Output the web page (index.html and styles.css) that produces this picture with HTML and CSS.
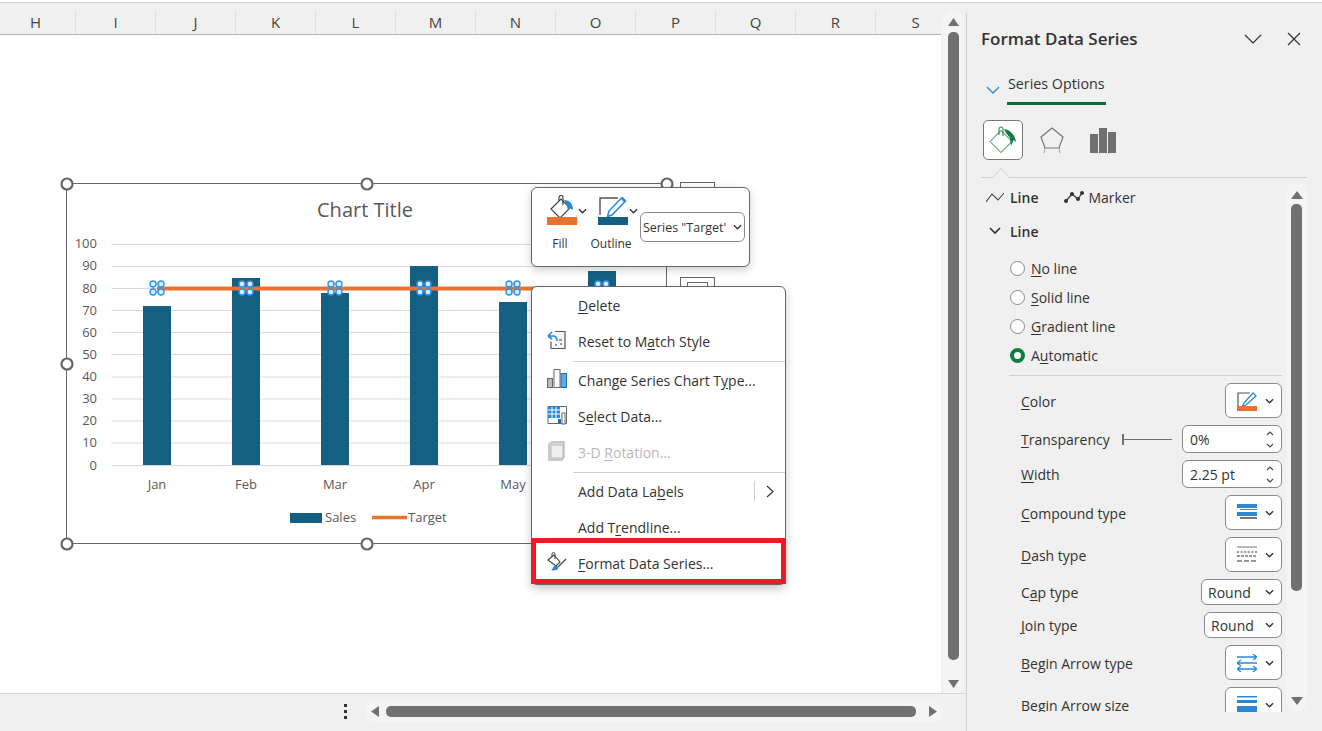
FILE: index.html
```html
<!DOCTYPE html>
<html lang="en">
<head>
  <meta charset="UTF-8">
  <title>Format Data Series</title>
  <link rel="stylesheet" href="styles.css">
</head>
<body>
  <!-- shared little icons -->
  <svg class="defs" width="0" height="0">
    <defs>
      <symbol id="chev" viewBox="0 0 10 6"><path d="M1 1l4 4 4-4" fill="none" stroke="#333" stroke-width="1.5"/></symbol>
      <symbol id="spin-up" viewBox="0 0 10 6"><path d="M2 5l3-3 3 3" fill="none" stroke="#444" stroke-width="1.2"/></symbol>
      <symbol id="spin-down" viewBox="0 0 10 6"><path d="M2 1l3 3 3-3" fill="none" stroke="#444" stroke-width="1.2"/></symbol>
      <g id="pt">
        <path d="M-4-4H4V4H-4Z" fill="none" stroke="#2f95e8" stroke-width="1"/>
        <circle cx="-4" cy="-4" r="3" fill="#d8ecfc" stroke="#2f95e8" stroke-width="1.4"/>
        <circle cx="4" cy="-4" r="3" fill="#d8ecfc" stroke="#2f95e8" stroke-width="1.4"/>
        <circle cx="-4" cy="4" r="3" fill="#d8ecfc" stroke="#2f95e8" stroke-width="1.4"/>
        <circle cx="4" cy="4" r="3" fill="#d8ecfc" stroke="#2f95e8" stroke-width="1.4"/>
      </g>
      <circle id="handle" r="5.5" fill="#fff" stroke="#666" stroke-width="2.2"/>
    </defs>
  </svg>

  <div class="app">
    <div class="sheet-area">
      <div class="col-head">
        <div class="col">H</div><div class="col">I</div><div class="col">J</div><div class="col">K</div>
        <div class="col">L</div><div class="col">M</div><div class="col">N</div><div class="col">O</div>
        <div class="col">P</div><div class="col">Q</div><div class="col">R</div><div class="col">S</div>
      </div>

      <div class="vscroll">
        <svg class="arrow" width="11" height="9" viewBox="0 0 11 9"><path d="M5.5 1L11 9H0Z" fill="#707070"/></svg>
        <div class="vthumb"></div>
        <svg class="arrow arrow-down" width="11" height="9" viewBox="0 0 11 9"><path d="M0 0H11L5.5 8Z" fill="#707070"/></svg>
      </div>

      <div class="sheet">
        <!-- chart sits free on the sheet, coordinates in the viewBox are window pixels -->
        <svg class="chart" width="941" height="658" viewBox="0 35 941 658">
          <rect x="680.500" y="182.500" width="34" height="30" fill="#fff" stroke="#666"/>
          <rect x="680.500" y="277.500" width="34" height="30" fill="#fff" stroke="#666"/>
          <rect x="687.500" y="282.500" width="20" height="20" fill="#fff" stroke="#666"/>
          <rect x="66.500" y="183.500" width="600" height="360" fill="#fff" stroke="#666"/>

          <text class="chart-title" x="365" y="217" text-anchor="middle">Chart Title</text>

          <g stroke="#d9d9d9">
            <path d="M112 244.500H646M112 266.500H646M112 288.500H646M112 310.500H646M112 332.500H646M112 354.500H646M112 377H646M112 399H646M112 421H646M112 443H646M112 465.500H646"/>
          </g>
          <g class="axis" text-anchor="end">
            <text x="97" y="248">100</text><text x="97" y="270">90</text><text x="97" y="293">80</text>
            <text x="97" y="315">70</text><text x="97" y="337">60</text><text x="97" y="359">50</text>
            <text x="97" y="381">40</text><text x="97" y="403">30</text><text x="97" y="425">20</text>
            <text x="97" y="447">10</text><text x="97" y="470">0</text>
          </g>

          <g fill="#156082">
            <rect x="143" y="306" width="28" height="159"/>
            <rect x="232" y="278" width="28" height="187"/>
            <rect x="321" y="293" width="28" height="172"/>
            <rect x="410" y="266" width="28" height="199"/>
            <rect x="499" y="302" width="28" height="163"/>
            <rect x="588" y="271" width="28" height="194"/>
          </g>
          <path d="M157 288.500H602" stroke="#e97132" stroke-width="4"/>
          <use href="#pt" x="157" y="288"/><use href="#pt" x="246" y="288"/><use href="#pt" x="335" y="288"/>
          <use href="#pt" x="424" y="288"/><use href="#pt" x="513" y="288"/><use href="#pt" x="602" y="288"/>

          <g class="axis" text-anchor="middle">
            <text x="157" y="489">Jan</text><text x="246" y="489">Feb</text><text x="335" y="489">Mar</text>
            <text x="424" y="489">Apr</text><text x="513" y="489">May</text>
          </g>

          <rect x="290" y="513" width="32" height="10" fill="#156082"/>
          <text class="axis" x="325" y="522">Sales</text>
          <path d="M372 517.500H407" stroke="#e97132" stroke-width="3.500"/>
          <text class="axis" x="408" y="522">Target</text>

          <use href="#handle" x="67" y="184"/><use href="#handle" x="367" y="184"/><use href="#handle" x="667" y="184"/>
          <use href="#handle" x="67" y="364"/><use href="#handle" x="67" y="544"/><use href="#handle" x="367" y="544"/>
        </svg>

        <!-- mini toolbar -->
        <div class="mini-bar">
          <div class="mini-btn">
            <div class="mini-icon">
              <svg width="30" height="30" viewBox="0 0 30 30">
                <path d="M4 14L14 4l9 9-10 10Z" fill="#fff" stroke="#444" stroke-width="1.2"/>
                <path d="M12 6V2.500a2 2 0 0 1 4 0V10" fill="none" stroke="#444" stroke-width="1.2"/>
                <path d="M17 5c6 0 9 4 9 10l-3-2-2 3-1-5Z" fill="#2b88d8"/>
                <rect y="22" width="30" height="8" fill="#e97132"/>
              </svg>
              <svg class="chev" width="9" height="6"><use href="#chev"/></svg>
            </div>
            <span>Fill</span>
          </div>
          <div class="mini-btn">
            <div class="mini-icon">
              <svg width="30" height="30" viewBox="0 0 30 30">
                <path d="M20 3H2V20" fill="none" stroke="#555" stroke-width="1.4"/>
                <path d="M11 16L24 2.500l3.500 3.500L14 20l-4.500 1.500Z" fill="#fff" stroke="#2b88d8" stroke-width="1.5"/>
                <path d="M23 4l3.500 3.500 1.500-2-3-3Z" fill="#2b88d8"/>
                <rect y="22" width="30" height="8" fill="#156082"/>
              </svg>
              <svg class="chev" width="9" height="6"><use href="#chev"/></svg>
            </div>
            <span>Outline</span>
          </div>
          <div class="mini-select">Series "Target'<svg class="chev" width="9" height="6"><use href="#chev"/></svg></div>
        </div>

        <!-- context menu -->
        <div class="menu">
          <div class="menu-item"><span class="menu-icon"></span><span><u>D</u>elete</span></div>
          <div class="menu-item">
            <span class="menu-icon">
              <svg width="20" height="20" viewBox="0 0 20 20">
                <path d="M8 1.500h10v17H4v-7" fill="#f7f7f7" stroke="#555" stroke-width="1.2"/>
                <path d="M1 6l4-4M1 6l4 3M1 6h5c3 0 4 2 4 5" fill="none" stroke="#2b88d8" stroke-width="1.6"/>
                <path d="M8 15h2M12 10h3M13 14h2" stroke="#777" stroke-width="1.4"/>
              </svg>
            </span>
            <span>Reset to M<u>a</u>tch Style</span>
          </div>
          <div class="menu-sep"></div>
          <div class="menu-item">
            <span class="menu-icon">
              <svg width="20" height="20" viewBox="0 0 20 20">
                <rect x="0.500" y="9.500" width="5" height="9" fill="#bbb" stroke="#666"/>
                <rect x="7" y="0.500" width="6" height="18" fill="#fff" stroke="#666"/>
                <rect x="14" y="4.500" width="5.500" height="14" fill="#5ea9e6" stroke="#1f6fb5"/>
              </svg>
            </span>
            <span>Change Series Chart T<u>y</u>pe...</span>
          </div>
          <div class="menu-item">
            <span class="menu-icon">
              <svg width="20" height="20" viewBox="0 0 20 20">
                <path d="M1 1.500H19.500V18.500H1Z" fill="#fff" stroke="#666"/>
                <path d="M1 1.500H13V13H1Z" fill="#2b88d8"/>
                <path d="M1 5H13M1 9H13M5 2V13M9 2V13" stroke="#fff"/>
                <rect x="11" y="14" width="3" height="5" fill="#1f6fb5"/>
                <rect x="15" y="8" width="3" height="11" fill="#fff" stroke="#666"/>
              </svg>
            </span>
            <span>S<u>e</u>lect Data...</span>
          </div>
          <div class="menu-item menu-off">
            <span class="menu-icon">
              <svg width="20" height="20" viewBox="0 0 20 20">
                <path d="M2 3l3-2h12v15l-2 3H2Z" fill="#ddd" stroke="#bbb" stroke-width="1.400"/>
                <path d="M4 4h12v13H4Z" fill="#eee" stroke="#bbb"/>
              </svg>
            </span>
            <span>3-D <u>R</u>otation...</span>
          </div>
          <div class="menu-sep"></div>
          <div class="menu-item">
            <span class="menu-icon"></span><span>Add Data La<u>b</u>els</span>
            <span class="menu-sub">
              <svg width="10" height="13" viewBox="0 0 10 13"><path d="M2 1l6 5.500-6 5.500" fill="none" stroke="#333" stroke-width="1.2"/></svg>
            </span>
          </div>
          <div class="menu-item"><span class="menu-icon"></span><span>Add T<u>r</u>endline...</span></div>
          <div class="menu-item">
            <span class="menu-icon">
              <svg width="20" height="20" viewBox="0 0 20 20">
                <path d="M1 8l6-5 6 7-4 4Z" fill="#fff" stroke="#444" stroke-width="1.1"/>
                <path d="M5 5V2a1.500 1.500 0 0 1 3 0v5" fill="none" stroke="#444"/>
                <path d="M19 7l-8 8" stroke="#555" stroke-width="1.500"/>
                <path d="M7 14c3-1 5 1 4 3-1 1-4 2-7 1 2-1 2-3 3-4Z" fill="#2b88d8"/>
              </svg>
            </span>
            <span><u>F</u>ormat Data Series...</span>
          </div>
          <div class="menu-mark"></div>
        </div>
      </div>

      <div class="hbar">
        <div class="dots"><i></i><i></i><i></i></div>
        <div class="htrack">
          <svg width="10" height="11" viewBox="0 0 10 11"><path d="M9 0V11L1 5.500Z" fill="#707070"/></svg>
          <div class="hthumb"></div>
          <svg width="10" height="11" viewBox="0 0 10 11"><path d="M1 0V11L9 5.500Z" fill="#707070"/></svg>
        </div>
      </div>
    </div>

    <div class="panel">
      <div class="panel-head">
        <div class="panel-title">Format Data Series</div>
        <div class="panel-tools">
          <svg width="18" height="10" viewBox="0 0 18 10"><path d="M1 1l8 8 8-8" fill="none" stroke="#333" stroke-width="1.2"/></svg>
          <svg width="14" height="14" viewBox="0 0 14 14"><path d="M1 1l12 12M13 1L1 13" stroke="#333" stroke-width="1.2"/></svg>
        </div>
      </div>

      <div class="series-row">
        <svg width="14" height="8" viewBox="0 0 14 8"><path d="M1 1l6 6 6-6" fill="none" stroke="#2b88d8" stroke-width="1.3"/></svg>
        <div class="series-tab">Series Options</div>
      </div>

      <div class="cat-icons">
        <div class="cat-btn cat-on">
          <svg width="30" height="28" viewBox="0 0 30 28">
            <path d="M2 15.500L13 4.500l11 11-11 11Z" fill="#fff" stroke="#107c41" stroke-width="1"/>
            <path d="M11 9V3a2 2 0 0 1 4 0v7" fill="none" stroke="#107c41"/>
            <path d="M16 3c6 1 11 5 12 13l-2.500-2-2.500 6-1-8-4-5Z" fill="#107c41"/>
          </svg>
        </div>
        <div class="cat-btn">
          <svg width="26" height="28" viewBox="0 0 26 28">
            <path d="M13 2l11 9-4 11H6L2 11Z" fill="none" stroke="#777" stroke-width="1.2"/>
            <path d="M6 22l-1 5M20 22l1 5" stroke="#aaa" stroke-width="1.2"/>
          </svg>
        </div>
        <div class="cat-btn cat-bars">
          <svg width="27" height="26" viewBox="0 0 27 26">
            <path d="M0 7H8V26H0ZM9 1H17V26H9ZM18 5H26V26H18Z" fill="#707070"/>
          </svg>
        </div>
      </div>

      <svg class="notch" width="326" height="11" viewBox="0 0 326 11">
        <path d="M0 10.500H12L20 1l8 9.500H326" fill="none" stroke="#d0d0d0"/>
      </svg>

      <div class="panel-body">
        <div class="panel-content">
          <div class="sub-tabs">
            <svg width="18" height="12" viewBox="0 0 18 12"><path d="M0 11l6-8 6 6 6-7" fill="none" stroke="#444" stroke-width="1.1"/></svg>
            <b>Line</b>
            <svg class="marker-icon" width="20" height="13" viewBox="0 0 20 13">
              <path d="M2 10l6-7 6 5 4-6" fill="none" stroke="#333" stroke-width="1.2"/>
              <circle cx="2" cy="10" r="2" fill="#333"/><circle cx="8" cy="3" r="2" fill="#333"/>
              <circle cx="14" cy="8" r="2" fill="#333"/><circle cx="18" cy="2" r="2" fill="#333"/>
            </svg>
            <span>Marker</span>
          </div>

          <div class="section-head">
            <svg width="12" height="8" viewBox="0 0 12 8"><path d="M1 1l5 5 5-5" fill="none" stroke="#333" stroke-width="1.6"/></svg>
            <b>Line</b>
          </div>

          <div class="radios">
            <div class="radio-row"><i class="radio"></i><span><u>N</u>o line</span></div>
            <div class="radio-row"><i class="radio"></i><span><u>S</u>olid line</span></div>
            <div class="radio-row"><i class="radio"></i><span><u>G</u>radient line</span></div>
            <div class="radio-row"><i class="radio radio-on"></i><span>A<u>u</u>tomatic</span></div>
          </div>

          <div class="rule"></div>

          <div class="opts">
            <div class="opt">
              <span class="opt-label"><u>C</u>olor</span>
              <div class="pick">
                <svg width="20" height="20" viewBox="0 0 20 20">
                  <path d="M13 2H1V15" fill="none" stroke="#555" stroke-width="1.2"/>
                  <path d="M7 12l9-10 3 3-10 9-3.500 1Z" fill="#fff" stroke="#2b88d8" stroke-width="1.3"/>
                  <rect y="15" width="20" height="5" fill="#e97132"/>
                </svg>
                <svg class="chev" width="9" height="6"><use href="#chev"/></svg>
              </div>
            </div>
            <div class="opt">
              <span><u>T</u>ransparency</span>
              <div class="opt-group">
                <div class="slider"></div>
                <div class="spin"><span class="spin-val">0%</span>
                  <div class="spin-arrows"><svg width="10" height="6"><use href="#spin-up"/></svg><svg width="10" height="6"><use href="#spin-down"/></svg></div>
                </div>
              </div>
            </div>
            <div class="opt">
              <span class="opt-label"><u>W</u>idth</span>
              <div class="spin"><span class="spin-val">2.25 pt</span>
                <div class="spin-arrows"><svg width="10" height="6"><use href="#spin-up"/></svg><svg width="10" height="6"><use href="#spin-down"/></svg></div>
              </div>
            </div>
            <div class="opt">
              <span class="opt-label"><u>C</u>ompound type</span>
              <div class="pick">
                <svg width="20" height="18" viewBox="0 0 20 18">
                  <path d="M0 0H20V4H0ZM0 8H20V12H0Z" fill="#2b88d8"/>
                  <path d="M3 5H20V6H3ZM3 13H20V15H3Z" fill="#777"/>
                </svg>
                <svg class="chev" width="9" height="6"><use href="#chev"/></svg>
              </div>
            </div>
            <div class="opt">
              <span class="opt-label"><u>D</u>ash type</span>
              <div class="pick">
                <svg width="20" height="17" viewBox="0 0 20 17">
                  <path d="M0 1H20" stroke="#777"/>
                  <path d="M0 6H20" stroke="#777" stroke-dasharray="2 1.600" stroke-width="1.500"/>
                  <path d="M0 10H20" stroke="#777" stroke-dasharray="3 1" stroke-width="1.500"/>
                  <path d="M0 15H20" stroke="#777" stroke-dasharray="5 2" stroke-width="1.500"/>
                </svg>
                <svg class="chev" width="9" height="6"><use href="#chev"/></svg>
              </div>
            </div>
            <div class="opt">
              <span class="opt-label">C<u>a</u>p type</span>
              <div class="drop drop-cap">Round<svg class="chev" width="9" height="6"><use href="#chev"/></svg></div>
            </div>
            <div class="opt">
              <span class="opt-label"><u>J</u>oin type</span>
              <div class="drop drop-join">Round<svg class="chev" width="9" height="6"><use href="#chev"/></svg></div>
            </div>
            <div class="opt">
              <span class="opt-label"><u>B</u>egin Arrow type</span>
              <div class="pick">
                <svg width="20" height="18" viewBox="0 0 20 18">
                  <path d="M0 3H20M16 0l4 3-4 3M0 9H20M4 6L0 9l4 3M0 15H20M4 12l-4 3 4 3M16 12l4 3-4 3" fill="none" stroke="#2b88d8" stroke-width="1.300"/>
                </svg>
                <svg class="chev" width="9" height="6"><use href="#chev"/></svg>
              </div>
            </div>
            <div class="opt">
              <span class="opt-label"><u>B</u>egin Arrow size</span>
              <div class="pick">
                <svg width="20" height="18" viewBox="0 0 20 18">
                  <path d="M0 0H20V1.500H0ZM0 4H20V7H0ZM0 10H20V18H0Z" fill="#2b88d8"/>
                </svg>
                <svg class="chev" width="9" height="6"><use href="#chev"/></svg>
              </div>
            </div>
          </div>
        </div>

        <div class="panel-scroll">
          <svg class="arrow" width="12" height="9" viewBox="0 0 12 9"><path d="M6 1l6 8H0Z" fill="#707070"/></svg>
          <div class="pthumb"></div>
          <svg class="arrow arrow-down" width="12" height="9" viewBox="0 0 12 9"><path d="M0 0H12L6 8Z" fill="#707070"/></svg>
        </div>
      </div>
    </div>
  </div>
</body>
</html>
```

FILE: styles.css
```css
html, body {
  margin: 0;
  padding: 0;
}
body {
  width: 1322px;
  height: 731px;
  overflow: hidden;
  background: #fff;
  font-family: "Open Sans", "Noto Sans", sans-serif;
  font-size: 14px;
  color: #333;
}
.defs {
  position: absolute;
}
u {
  text-underline-offset: 2px;
}

.app {
  display: flex;
  height: 728px;
  margin-top: 2px;
  border-top: 1px solid #d0d0d0;
  background: #f0f0f0;
}

/* left side: the sheet */
.sheet-area {
  display: grid;
  grid-template-columns: 941px 25px;
  grid-template-rows: 32px 658px 38px;
  width: 966px;
}
.col-head {
  display: flex;
  overflow: hidden;
  border-bottom: 1px solid #b4b4b4;
  box-sizing: border-box;
}
.col {
  flex: 0 0 80px;
  margin-top: 8px;
  border-right: 1px solid #e0e0e0;
  box-sizing: border-box;
  text-align: center;
  font-size: 15px;
  line-height: 23px;
  color: #444;
}
.col:first-child {
  margin-left: -4px;
}
.sheet {
  position: relative;
  grid-column: 1;
  grid-row: 2;
  background: #fff;
}
.chart {
  display: block;
}
.chart-title {
  font-size: 20px;
  fill: #595959;
}
.axis {
  font-size: 13px;
  fill: #595959;
}

.vscroll {
  grid-column: 2;
  grid-row: 1 / 3;
  display: flex;
  flex-direction: column;
  align-items: center;
  width: 22px;
  height: 684px;
  margin: 8px 0 0 1px;
  border-radius: 11px;
  background: #f4f4f4;
}
.vscroll .arrow {
  margin-top: 6px;
}
.vthumb {
  flex: none;
  width: 11px;
  height: 628px;
  margin-top: 6px;
  border-radius: 5px;
  background: #707070;
}
.vscroll .arrow-down {
  margin-top: 20px;
}

.hbar {
  grid-column: 1 / 3;
  grid-row: 3;
  display: flex;
  align-items: center;
  height: 38px;
  box-sizing: border-box;
  border-top: 1px solid #d8d8d8;
  padding-bottom: 2px;
}
.dots {
  display: flex;
  flex-direction: column;
  gap: 3px;
  margin-left: 344px;
}
.dots i {
  display: block;
  width: 3px;
  height: 3px;
  background: #333;
}
.htrack {
  display: flex;
  align-items: center;
  width: 578px;
  height: 21px;
  margin-left: 18px;
  padding: 0 5px;
  box-sizing: border-box;
  border-radius: 10px;
  background: #f4f4f4;
}
.hthumb {
  flex: none;
  width: 530px;
  height: 11px;
  margin: 0 12px 0 6px;
  border-radius: 5px;
  background: #707070;
}

/* chart mini toolbar */
.mini-bar {
  position: absolute;
  left: 531px;
  top: 152px;
  display: flex;
  width: 219px;
  height: 80px;
  box-sizing: border-box;
  padding: 7px 4px 0 15px;
  border: 1px solid #666;
  border-radius: 6px;
  background: #fff;
  box-shadow: 0 3px 8px rgba(0, 0, 0, .2);
  font-size: 12px;
}
.mini-btn {
  display: flex;
  flex-direction: column;
  width: 51px;
}
.mini-btn span {
  display: flex;
  justify-content: center;
  width: 26px;
  margin-top: 11px;
  white-space: nowrap;
  line-height: 16px;
}
.mini-icon {
  display: flex;
  align-items: flex-start;
  gap: 1px;
}
.mini-icon .chev {
  margin-top: 13px;
}
.chev {
  flex: none;
}
.mini-select {
  display: flex;
  align-items: center;
  justify-content: space-between;
  align-self: flex-start;
  width: 105px;
  height: 30px;
  margin: 17px 0 0 -9px;
  padding: 0 2px;
  box-sizing: border-box;
  border: 1px solid #8a8a8a;
  border-radius: 6px;
  white-space: nowrap;
  font-size: 12.5px;
}

/* context menu */
.menu {
  position: absolute;
  left: 531px;
  top: 251px;
  width: 255px;
  box-sizing: border-box;
  padding: 1px 0 2px;
  border: 1px solid #666;
  border-radius: 6px;
  background: #fff;
  box-shadow: 0 4px 10px rgba(0, 0, 0, .22);
}
.menu-item {
  display: flex;
  align-items: center;
  gap: 10px;
  height: 36px;
  padding: 0 0 2px 14px;
  box-sizing: border-box;
}
.menu-icon {
  display: flex;
  flex: 0 0 22px;
  justify-content: center;
  margin-bottom: 2px;
}
.menu-off {
  color: #b8b8b8;
}
.menu-sep {
  height: 1px;
  margin: 1px 0 1px 41px;
  background: #d0d0d0;
}
.menu-sub {
  display: flex;
  align-items: center;
  height: 20px;
  margin-left: auto;
  margin-right: 10px;
  padding-left: 10px;
  border-left: 1px solid #ccc;
}
.menu-mark {
  position: absolute;
  left: -1px;
  top: 251px;
  width: 255px;
  height: 46px;
  box-sizing: border-box;
  border: 5px solid #ed1c24;
}

/* right side: format pane */
.panel {
  flex: 1;
  margin-top: 10px;
  padding: 14px 0 0 14px;
  border-left: 1px solid #d0d0d0;
  box-sizing: border-box;
  height: 718px;
  overflow: hidden;
}
.panel-head {
  display: flex;
  align-items: center;
  justify-content: space-between;
  height: 24px;
}
.panel-title {
  margin-bottom: 2px;
  font-size: 17px;
  font-weight: 600;
  color: #333;
}
.panel-tools {
  display: flex;
  align-items: center;
  gap: 25px;
  margin-right: 21px;
}
.series-row {
  display: flex;
  align-items: center;
  gap: 7px;
  margin: 20px 0 0 5px;
}
.series-row svg {
  margin-top: 4px;
}
.series-tab {
  width: 99px;
  height: 34px;
  box-sizing: border-box;
  padding: 2px 1px 0;
  line-height: 22px;
  border-bottom: 3px solid #0f6b3a;
  white-space: nowrap;
  font-size: 14.300px;
}
.cat-icons {
  display: flex;
  align-items: center;
  gap: 9px;
  margin: 15px 0 0 2px;
}
.cat-btn {
  display: flex;
  align-items: center;
  justify-content: center;
  width: 40px;
  height: 40px;
  box-sizing: border-box;
}
.cat-on {
  border: 1px solid #777;
  border-radius: 5px;
  background: #fff;
}
.cat-bars {
  margin-left: 2px;
}
.notch {
  display: block;
  margin-top: 7px;
}
.panel-body {
  display: flex;
  height: 529px;
  margin-top: 5px;
  overflow: hidden;
}
.panel-content {
  width: 305px;
  height: 529px;
  padding-right: 4px;
  box-sizing: border-box;
  overflow: hidden;
}
.sub-tabs {
  display: flex;
  align-items: center;
  height: 20px;
  margin: 4px 0 0 5px;
}
.sub-tabs b {
  margin-left: 6px;
  font-weight: 600;
}
.sub-tabs .marker-icon {
  margin-left: 26px;
}
.sub-tabs span {
  margin-left: 4px;
}
.section-head {
  display: flex;
  align-items: center;
  gap: 9px;
  height: 20px;
  margin: 14px 0 0 8px;
}
.section-head b {
  font-weight: 600;
}
.radios {
  margin: 13px 0 0 29px;
}
.radio-row {
  display: flex;
  align-items: center;
  gap: 6px;
  height: 29px;
}
.radio {
  display: block;
  width: 15px;
  height: 15px;
  box-sizing: border-box;
  border: 1px solid #8a8a8a;
  border-radius: 50%;
  background: #fff;
}
.radio-on {
  border: 4px solid #107c41;
}
.rule {
  height: 1px;
  margin: 5px 0 0 28px;
  background: #d0d0d0;
}
.opts {
  display: flex;
  flex-direction: column;
  gap: 7px;
  margin: 7px 0 0 40px;
}
.opt {
  display: flex;
  flex: none;
  align-items: center;
  justify-content: space-between;
}
.opt-label {
  margin-top: 1px;
}
.opt-group {
  display: flex;
  align-items: center;
  gap: 10px;
}
.slider {
  position: relative;
  width: 50px;
  height: 1px;
  background: #707070;
}
.slider::before {
  content: "";
  position: absolute;
  left: 0;
  top: -5px;
  width: 2px;
  height: 11px;
  background: #707070;
}
.pick, .spin, .drop {
  display: flex;
  align-items: center;
  box-sizing: border-box;
  border: 1px solid #8a8a8a;
  border-radius: 6px;
  background: #fff;
}
.pick {
  justify-content: space-between;
  width: 57px;
  height: 35px;
  padding: 0 7px 0 11px;
}
.spin {
  justify-content: space-between;
  width: 100px;
  height: 28px;
  padding: 0 6px 0 7px;
}
.spin-arrows {
  display: flex;
  flex-direction: column;
  gap: 7px;
}
.spin-arrows svg {
  display: block;
}
.drop {
  justify-content: space-between;
  height: 26px;
  padding: 0 7px 0 6px;
}
.drop-cap {
  width: 81px;
}
.drop-join {
  width: 78px;
}
.panel-scroll {
  display: flex;
  flex-direction: column;
  align-items: center;
  width: 21px;
  height: 529px;
  border-radius: 10px;
  background: #f4f4f4;
}
.panel-scroll .arrow {
  margin-top: 7px;
}
.pthumb {
  flex: none;
  width: 11px;
  height: 387px;
  margin-top: 5px;
  border-radius: 5px;
  background: #707070;
}
.panel-scroll .arrow-down {
  margin-top: 106px;
}
```
